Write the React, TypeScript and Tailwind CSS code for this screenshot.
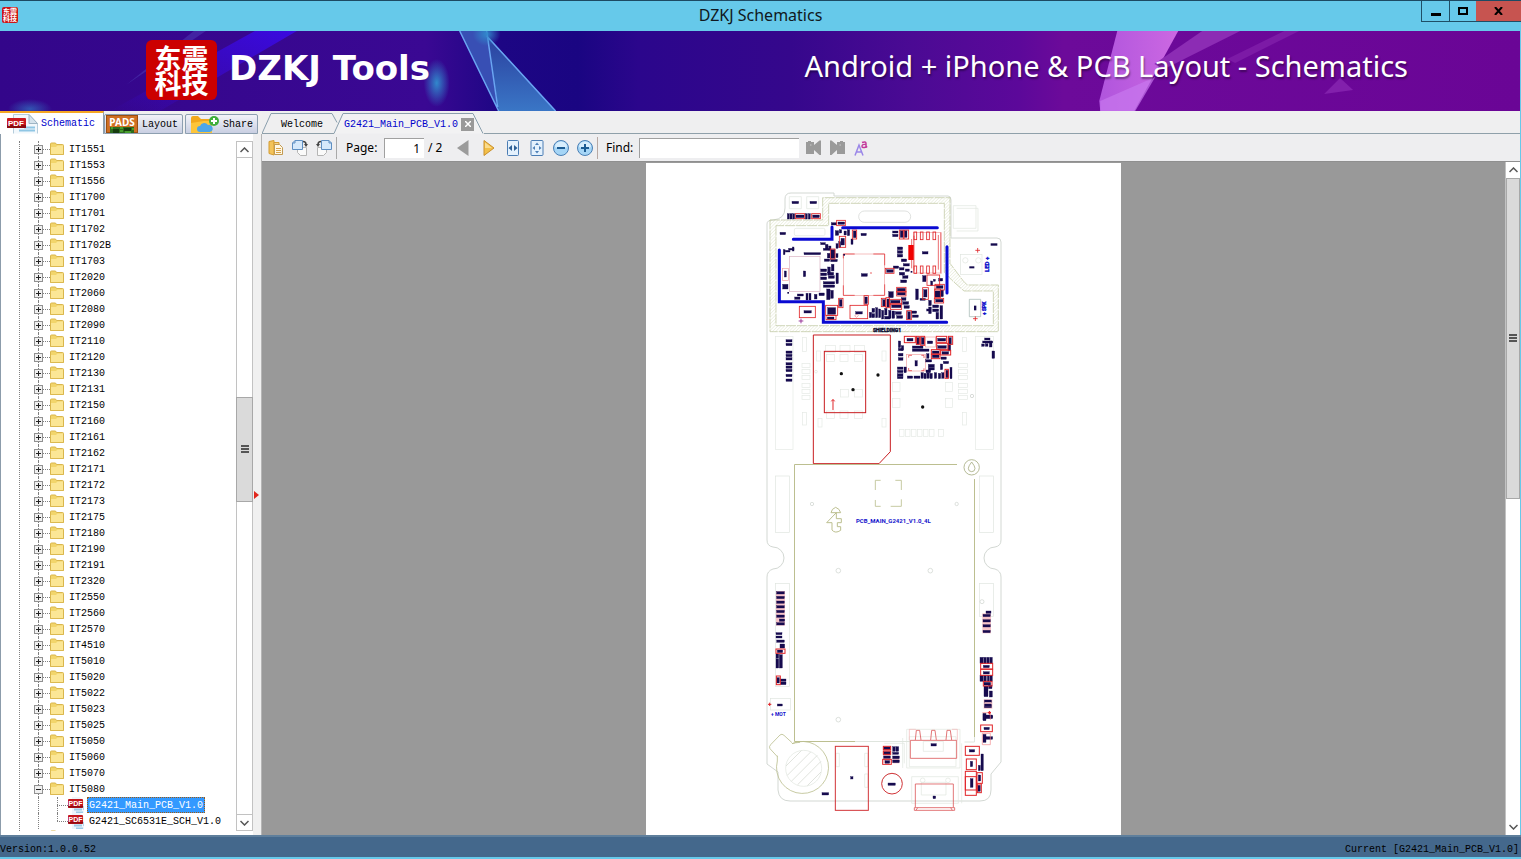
import { useState } from 'react'
import type { ReactNode } from 'react'

const FOLDERS = [
  'IT1551', 'IT1553', 'IT1556', 'IT1700', 'IT1701', 'IT1702', 'IT1702B', 'IT1703', 'IT2020', 'IT2060',
  'IT2080', 'IT2090', 'IT2110', 'IT2120', 'IT2130', 'IT2131', 'IT2150', 'IT2160', 'IT2161', 'IT2162',
  'IT2171', 'IT2172', 'IT2173', 'IT2175', 'IT2180', 'IT2190', 'IT2191', 'IT2320', 'IT2550', 'IT2560',
  'IT2570', 'IT4510', 'IT5010', 'IT5020', 'IT5022', 'IT5023', 'IT5025', 'IT5050', 'IT5060', 'IT5070',
  'IT5080',
]
const OPEN_FOLDER = 'IT5080'
const FILES = ['G2421_Main_PCB_V1.0', 'G2421_SC6531E_SCH_V1.0']

/* ---------- icons ---------- */

function FolderIcon() {
  return (
    <svg width="15" height="14" viewBox="0 0 15 14" className="shrink-0">
      <path d="M.5 12.500V2q0-1 1-1h4l1 1.500h6q1 0 1 1v9z" fill="#f2d56b" stroke="#d9b64c" />
      <path d="M1 5h5l1.500-1.500H13V12H1z" fill="#fbe695" />
      <path d="M.5 12.500h13" stroke="#dcb950" />
    </svg>
  )
}

function PdfIcon({ className = '' }: { className?: string }) {
  return (
    <svg width="16" height="16" viewBox="0 0 16 16" className={`shrink-0 ${className}`}>
      <path d="M4 0h8l4 4v12H4z" fill="#eef5fb" />
      <path d="M6 12.500h8M8 15.500h7" stroke="#9ccbe6" strokeWidth="2" />
      <path d="M15.500 9v4" stroke="#b7d4e8" />
      <rect x="0" y="2" width="15" height="9" rx="1" fill="#c4161c" />
      <path d="M0 9h15v1.500H0z" fill="#8f0a10" />
      <text x="7.500" y="9" textAnchor="middle" fontSize="7" fontWeight="700" fill="#fff" fontFamily="Liberation Sans, sans-serif">PDF</text>
    </svg>
  )
}

function PdfTabIcon() {
  return (
    <svg width="32" height="20" viewBox="0 0 32 20" className="shrink-0">
      <path d="M6.500 19.500V.500H22l8.500 9v10" fill="#f2f8fc" stroke="#b6cddc" />
      <path d="M22 .500l8.500 9H22z" fill="#d5e3ec" stroke="#9fb6c5" />
      <path d="M12 16.500h16M17 13.500h11" stroke="#8fc6e4" strokeWidth="2" />
      <rect x="0" y="4" width="19" height="10" rx="1" fill="#c9171e" />
      <path d="M0 11h19v3H0z" fill="#8c0b10" />
      <text x="9" y="12" textAnchor="middle" fontSize="8" fontWeight="700" fill="#fff" fontFamily="Liberation Sans, sans-serif">PDF</text>
    </svg>
  )
}

function PadsIcon() {
  return (
    <svg width="32" height="18" viewBox="0 0 32 18" className="shrink-0">
      <rect x=".5" y=".5" width="31" height="17" fill="#cf6f22" stroke="#9b4e10" />
      <text x="16" y="11" textAnchor="middle" fontSize="10" fontWeight="700" fill="#fff" fontFamily="Noto Sans, sans-serif">PADS</text>
      <path d="M4 12h24v6H4z" fill="#2c6a1c" />
      <path d="M7 14h6v4H7zM18 13h7v3h-7z" fill="#173c0f" />
      <path d="M5 13h2M14 13h3M26 14h2M14 16h3M19 17h6" stroke="#63d13a" />
    </svg>
  )
}

function ShareIcon() {
  return (
    <svg width="32" height="18" viewBox="0 0 32 18" className="shrink-0">
      <path d="M4 3q0-2 2-2h5l3 3h9q2 0 2 2v12H4z" fill="#f2a81d" />
      <path d="M4 8l13-2h8v12H4z" fill="#fdc53a" />
      <path d="M13 17a3 3 0 010-6 4.500 4.500 0 018-1 3.500 3.500 0 012 7z" fill="#4ea6e8" />
      <circle cx="27" cy="6" r="5" fill="#3fae3a" />
      <path d="M27 3v6M24 6h6" stroke="#fff" strokeWidth="2" />
    </svg>
  )
}

function CopyIcon() {
  return (
    <svg width="16" height="16" viewBox="0 0 16 16">
      <path d="M1 1.500l5-1V15l-5-1.500z" fill="#f3c35a" stroke="#d49c33" />
      <path d="M6 2.500h5v2H6z" fill="#f7d488" stroke="#d49c33" />
      <path d="M6.500 4.500h5l3 3v7h-8z" fill="#fff8e6" stroke="#c29a52" />
      <path d="M8 8.500h5M8 10.500h5M8 12.500h5" stroke="#d8a44a" />
    </svg>
  )
}

function RotateIcon({ flip = false }: { flip?: boolean }) {
  return (
    <svg width="16" height="16" viewBox="0 0 16 16" className={flip ? '-scale-x-100' : ''}>
      <path d="M5.500 7.500h9v8h-6l-3-3z" fill="#fafafa" stroke="#b5b5b5" />
      <path d="M3 .500h7.500v9H.500V3z" fill="#d6e9fb" stroke="#5f8fc2" />
      <path d="M3 .500V3H.500" fill="none" stroke="#5f8fc2" />
      <path d="M11 1.500c2 0 3 1 3 3" fill="none" stroke="#444" strokeWidth="1.500" />
      <path d="M12 4h4l-2 3z" fill="#444" />
    </svg>
  )
}

function TriangleIcon({ dir }: { dir: 'left' | 'right' }) {
  return dir === 'left' ? (
    <svg width="12" height="16" viewBox="0 0 12 16">
      <path d="M11.500 0v16L0 8z" fill="#9b9b9b" />
    </svg>
  ) : (
    <svg width="12" height="16" viewBox="0 0 12 16">
      <path d="M1 .500v15L11 8z" fill="#f2bf49" stroke="#c98f2c" />
      <path d="M2 2.500v5.500h7z" fill="#fbdc8d" />
    </svg>
  )
}

function FitWidthIcon() {
  return (
    <svg width="12" height="16" viewBox="0 0 12 16">
      <rect x=".5" y=".5" width="11" height="15" rx="1" fill="#e4f1fd" stroke="#4b7db4" />
      <path d="M5 5v6L1.500 8zM7 5v6l3.500-3z" fill="#2e6096" />
    </svg>
  )
}

function FitPageIcon() {
  return (
    <svg width="14" height="16" viewBox="0 0 14 16">
      <rect x="1" y=".5" width="12" height="15" rx="1" fill="#e4f1fd" stroke="#4b7db4" />
      <path d="M7 2.500L9 5H5zM7 13.500L9 11H5zM2.500 8L5 6v4zM11.500 8L9 6v4z" fill="#4d7fb5" />
    </svg>
  )
}

function ZoomIcon({ plus = false }: { plus?: boolean }) {
  return (
    <svg width="16" height="16" viewBox="0 0 16 16">
      <circle cx="8" cy="8" r="7.500" fill="#a5d5f6" stroke="#4a7fb5" />
      <path d="M2 7a6 5.500 0 0112 0q-6 3-12 0z" fill="#d8eefd" />
      <path d={plus ? 'M4 8h8M8 4v8' : 'M4 8h8'} stroke="#1c5c93" strokeWidth="2" />
    </svg>
  )
}

function FindIcon({ flip = false }: { flip?: boolean }) {
  return (
    <svg width="15" height="15" viewBox="0 0 15 15" className={flip ? '-scale-x-100' : ''}>
      <path d="M0 2h2V1h3v1h3v3l5.500-4.500H15V15h-1.500L8 10v4H0z" fill="#9a9a9a" />
      <path d="M4 5h1.500" stroke="#c9c9c9" />
    </svg>
  )
}

function MatchCaseIcon() {
  return (
    <svg width="14" height="16" viewBox="0 0 14 16">
      <path d="M1 15.500L5 5l4 10.500M2.500 12h5.500" fill="none" stroke="#9a86e8" strokeWidth="1.500" />
      <path d="M8 2.500q4-1.500 4 1V7q-4 1.500-4-.800T12 4.500M12 6l1 1.500" fill="none" stroke="#c43a9c" strokeWidth="1.500" />
    </svg>
  )
}

function Chevron({ up = false }: { up?: boolean }) {
  return (
    <svg width="9" height="6" viewBox="0 0 9 6" className={up ? '' : '-scale-y-100'}>
      <path d="M.5 5l4-4 4 4" fill="none" stroke="#555" strokeWidth="1.500" />
    </svg>
  )
}

/* ---------- board drawing ---------- */

// "x y w h" quadruples separated by commas
const parseRects = (list: string) => list.split(',').map((r) => r.trim().split(' ').map(Number))

function Boxes({ list, fill = 'none', stroke = 'none', sw = 2 }: { list: string; fill?: string; stroke?: string; sw?: number }) {
  return (
    <g fill={fill} stroke={stroke} strokeWidth={sw}>
      {parseRects(list).map(([x, y, w, h], i) => (
        <rect key={i} x={x} y={y} width={w} height={h} />
      ))}
    </g>
  )
}

const CHIP = '#160b4e'
const RED = '#e02428'
const PINK = '#f0a0a0'
const PALE = '#dfe5de'
const OLIVE = '#bcbf90'

const TOP_CHIPS = `96 49 20 7,150 49 20 7,82 86 6 16,90 86 6 16,98 86 6 16,108 90 24 8,136 86 6 16,145 86 6 16,158 90 20 8,
60 142 17 7,214 113 16 7,234 111 20 7,226 137 10 14,238 134 7 10,252 138 7 12,262 134 7 18,243 160 10 20,273 162 6 16,280 138 8 20,
303 145 16 7,398 138 16 6,398 148 16 7,421 137 8 20,433 137 8 20,412 186 16 8,412 197 16 8,412 208 16 8,424 222 16 8,487 200 17 7,
70 194 5 15,76 196 14 5,86 190 16 5,97 186 5 12,132 203 50 6,182 173 14 6,196 178 8 14,190 190 22 6,206 183 7 12,228 176 6 14,236 170 6 18,
202 205 8 14,213 194 12 26,228 206 6 12,193 222 16 7,212 223 20 7,130 258 7 17,73 258 6 18,68 298 16 14,
182 252 18 8,182 264 18 8,182 276 18 8,203 262 18 8,205 272 18 8,190 290 34 7,190 300 34 7,203 246 8 18,214 238 8 20,228 264 7 32,200 312 10 32,212 316 8 24,
104 336 16 7,112 327 18 6,138 325 6 20,147 325 6 20,163 328 8 14,177 324 16 8,132 377 22 7,203 368 24 20,202 396 20 7,238 344 8 20,
304 266 18 8,380 254 20 8,400 243 16 7,430 236 18 7,418 248 14 7,418 262 16 8,436 252 12 7,428 272 16 8,422 285 18 8,
314 336 8 20,287 380 20 7,386 320 14 18,412 310 24 8,412 322 24 8,368 344 8 20,381 342 7 24,392 346 28 8,395 360 28 8,
336 370 8 12,336 386 8 12,347 368 6 30,356 372 6 26,365 376 6 26,374 370 7 20,374 394 16 8,386 376 7 24,396 378 8 22,406 380 18 8,410 392 18 8,328 382 7 16,
428 350 18 8,432 362 16 8,443 380 8 22,424 338 14 8,457 390 18 7,454 378 16 7,467 312 8 32,491 314 10 22,480 340 16 6,
520 283 6 6,512 288 6 14,488 272 10 18,529 302 20 8,525 318 16 18,527 343 22 8,536 280 12 8,542 315 8 20,
506 346 8 16,506 366 8 20,518 360 18 8,518 372 18 8,528 382 8 20,540 362 8 40,500 372 12 6`

const TOP_RED = `230 106 26 16,106 86 28 15,155 86 26 15,238 154 19 33,277 135 13 27,418 135 12 27,432 135 14 27,211 192 14 30,376 250 26 15,
118 364 48 34,197 361 36 30,198 391 30 13,236 340 13 28,270 361 53 40,312 332 13 26,364 340 13 25,378 338 10 30,388 343 36 15,391 355 34 18,
410 307 28 14,410 319 28 14,440 377 14 27,501 270 38 31,488 308 17 35,525 298 28 17,524 312 17 26,523 340 28 14,
462 141 8 23,481 141 8 23,500 141 8 23,519 141 8 23,462 243 8 22,481 243 8 22,500 243 8 22,519 243 8 22`

const MID_CHIPS = `78 44 18 7,78 55 18 7,78 78 18 7,78 88 18 7,78 98 18 7,78 113 18 7,78 123 18 7,78 133 18 7,78 148 18 7,78 162 18 7,
674 39 16 6,668 48 30 6,665 57 8 7,676 56 8 8,688 48 8 18,696 78 8 22,415 48 7 20,415 70 14 7,415 85 14 8,415 98 14 8,424 62 7 14,
412 126 17 7,412 136 17 7,412 146 17 7,412 154 17 7,432 126 7 17,441 40 18 8,470 38 8 20,484 38 8 20,502 48 16 8,533 40 24 8,533 62 26 8,566 38 8 20,564 58 8 20,
457 63 32 7,457 72 50 7,517 78 20 8,517 90 20 8,500 86 7 14,497 104 18 7,546 80 20 8,543 96 16 7,465 107 7 16,505 118 18 8,505 127 18 8,541 117 7 17,550 109 16 7,
498 135 14 8,442 153 16 7,462 153 18 7,483 143 7 17,492 145 7 16,501 143 7 17,510 145 7 16,523 143 7 17,535 145 7 16,545 143 7 17,558 136 8 22,570 127 6 34`

const MID_RED = `433 34 33 19,469 34 9 24,482 34 12 27,529 34 31 18,530 55 34 18,565 34 13 24,514 74 26 13,514 88 26 13,542 76 30 14,555 133 10 27`

const PALE_MID = `46 35 53 339,647 35 53 339,127 38 12 42,607 38 12 42,127 262 12 38,607 262 12 38,170 78 12 30,366 78 12 30,174 280 12 26,366 280 12 26,
196 62 30 20,240 62 30 20,284 62 30 20,200 88 24 22,240 88 24 22,284 88 24 22,242 194 24 22,284 194 24 22,200 258 24 22,240 258 24 22,284 258 24 22,
398 172 22 27,398 220 22 27,556 172 22 27,556 220 22 27,418 313 14 22,436 313 14 22,454 313 14 22,472 313 14 22,490 313 14 22,508 313 14 22,536 313 14 22,
126 116 24 12,126 134 24 12,126 152 24 12,126 176 24 12,126 194 24 12,126 212 24 12,596 116 26 12,596 134 26 12,596 152 26 12,596 176 26 12,596 194 26 12,596 212 26 12`

const SIDE_CHIPS = `50 35 23 7,50 49 23 7,50 63 23 7,50 77 23 7,50 91 23 7,50 105 23 7,58 117 16 7,50 128 23 7,
48 158 18 6,48 168 18 6,50 180 23 7,60 192 14 12,52 210 16 8,48 222 8 12,48 236 8 28,58 224 9 40,50 293 8 16,60 297 18 7,62 306 16 8,52 372 15 6,
678 93 15 7,669 103 22 7,669 119 22 7,669 134 22 7,669 151 22 7,660 232 9 18,671 232 8 18,681 232 7 18,690 232 7 18,670 256 18 7,670 275 18 7,
660 286 10 18,672 286 7 18,682 286 6 18,690 286 7 18,672 307 20 8,672 318 12 32,686 316 10 10,688 333 9 18,673 361 22 8,673 375 22 8,
669 402 8 18,678 405 20 8`

const SIDE_RED = `48 207 27 13,49 288 12 26,662 250 36 17,662 268 36 18,670 304 26 14`

const LOW_CHIPS = `186 278 20 7,272 230 7 7,384 249 22 7,513 131 16 7,519 288 8 8,371 141 20 8,371 155 20 8,371 168 20 7,375 182 14 8,
398 140 8 14,408 140 8 14,398 157 18 6,398 168 20 8,398 180 20 8,669 40 9 22,678 48 20 8,672 82 16 7,669 103 9 24,678 110 20 8,
628 149 16 7,631 184 7 16,663 162 7 50,655 196 6 16,631 236 8 26,655 225 7 18,653 256 8 18,674 0 20 6,674 12 20 8`

const LOW_RED = `370 139 22 10,370 153 22 10,368 178 26 15,616 139 42 27,619 177 30 32,651 218 16 32,652 252 12 26,616 214 33 72,616 230 33 40,662 75 35 20`

function BoardDrawing() {
  return (
    <svg width="475" height="671" viewBox="646 163 475 671" className="block" role="img" aria-label="G2421_Main_PCB_V1.0">
      <defs>
        <pattern id="hatch" width="7" height="7" patternUnits="userSpaceOnUse" patternTransform="rotate(45)">
          <path d="M0 0v7" stroke="#d3d9b8" strokeWidth="2" />
        </pattern>
      </defs>

      {/* board outline */}
      <path
        d="M767 540V224q0-4 6-4 12-1 12-12v-9q0-6 6-6h43v3h114q3 0 3 4v38h46q4 0 4 4V540q0 6-6 7a11 11 0 000 22q6 2 6 8V762l-10 12v16q0 11-11 11H790q-11 0-12-11V772l-11-8V577q0-6 6-8a11 11 0 000-22q-6-1-6-7z"
        fill="none" stroke="#d3d8d3" strokeWidth="1"
      />

      {/* RF and baseband section */}
      <g transform="translate(760 185) scale(.33333)">
        <path
          fillRule="evenodd" fill="url(#hatch)" stroke="#b9c199" strokeWidth="2" strokeDasharray="30 3"
          d="M30 105H188V38H570V235L610 288L622 300H715V440H30zM48 122V422H700V318H612L575 285L553 262V55H206V122z"
        />
        <g fill="none" stroke={PALE} strokeWidth="2">
          <rect x="296" y="78" width="156" height="34" rx="17" stroke="#cfd2cf" />
          <rect x="103" y="130" width="92" height="22" rx="5" />
          <path d="M580 62h68v68h-68zM590 70h64v68h-64M88 35h36v36H88zM140 35h36v36h-36z" />
          <rect x="602" y="208" width="64" height="60" />
          <circle cx="616" cy="226" r="8" /><circle cx="655" cy="226" r="8" />
          <path d="M628 343h34v52h-34z" stroke="#9bb1aa" />
        </g>
        <Boxes list="88 214 92 106" stroke="#d9aebf" />
        <Boxes list="250 207 124 124" stroke={PINK} />
        <path d="M250 220v-13h34M340 207h34v34M374 298v33h-34M284 331h-34v-30" fill="none" stroke={RED} strokeWidth="2" />
        <Boxes list="460 142 82 122,68 250 18 36" stroke={PINK} />
        <path d="M455 162v88M462 152v104M543 142v124M535 150v104" stroke={RED} strokeWidth="2" />
        <Boxes list="445 180 16 45" fill="#f00000" />
        <Boxes list={TOP_CHIPS} fill={CHIP} stroke={CHIP} sw={1} />
        <Boxes list={TOP_RED} stroke={RED} sw={2.500} />
        <path d="M248 128H532M216 126V163H100M58 195V350H190V412H560M561 185V324" fill="none" stroke="#0a0ad2" strokeWidth="9" strokeLinecap="round" />
        <path d="M646 196h14M653 189v14M639 401h14M646 394v14" stroke={RED} strokeWidth="2.500" />
        <path d="M116 408h14M123 401v14" stroke="#8a1c8a" strokeWidth="2.500" />
        <path d="M284 393l6-6 5 5-5 5z" fill="none" stroke={RED} />
        <Boxes list="628 244 15 6,642 362 7 14,692 175 20 7,82 321 5 5,250 207 5 5,452 258 5 5" fill={CHIP} />
        <circle cx="333" cy="264" r="2" fill={RED} />
      </g>

      {/* SIM and PA section */}
      <g transform="translate(760 325) scale(.33333)">
        <Boxes list={PALE_MID} stroke="#e4e9e4" sw={2} />
        <path d="M160 30H391V380L357 416H160z" fill="none" stroke="#c81c20" strokeWidth="3" />
        <Boxes list="193 79 124 184" stroke="#c81c20" sw={3} />
        <path d="M219 255v-30M214 229l5-6 5 6" stroke={RED} fill="none" strokeWidth="3" />
        <Boxes list="496 36 30 30,440 88 56 50" stroke={PINK} />
        <path d="M446 98v-7h10M484 91h8v8M492 130v7h-8M456 137h-10v-8" fill="none" stroke={RED} strokeWidth="2" />
        <Boxes list={MID_CHIPS} fill={CHIP} stroke={CHIP} sw={1} />
        <Boxes list={MID_RED} stroke={RED} sw={3} />
        <g fill="#111">
          <circle cx="244" cy="146" r="5" /><circle cx="354" cy="150" r="5" /><circle cx="279" cy="194" r="5" /><circle cx="488" cy="246" r="5" />
        </g>
        <circle cx="636" cy="213" r="5" fill="none" stroke="#c5cac5" strokeWidth="2" />
        <circle cx="168" cy="140" r="4" fill="none" stroke={PALE} strokeWidth="2" />
        <circle cx="635" cy="427" r="23" fill="none" stroke="#a7ad82" strokeWidth="2.500" />
        <path d="M635 411q-10 13-10 19a10 10 0 0020 0q0-6-10-19z" fill="none" stroke="#a7ad82" strokeWidth="2.500" />
      </g>

      {/* display area */}
      <path d="M794.500 464.500H957M794.500 464.500V741.500H855M974.500 479V737" fill="none" stroke={OLIVE} />
      <path d="M855 741.500H910M974.500 737v5h-10" fill="none" stroke={PALE} />
      <g transform="translate(760 470) scale(.33333)" fill="none" stroke={PALE} strokeWidth="2">
        <rect x="46" y="18" width="42" height="170" />
        <rect x="658" y="18" width="42" height="170" />
        <path d="M346 60V31h16M406 31h18v29M424 88v21h-32M362 109h-16V90" stroke={OLIVE} strokeWidth="2.500" />
        <path
          d="M213 128q2-12 14-16 12 4 15 16zM229 128l-29 30h16v22q10 12 26 1v-11h-10v-12h12v-12h-15z"
          stroke={OLIVE} strokeWidth="3"
        />
        <g stroke="#ccd2cc">
          <circle cx="156" cy="102" r="5" /><circle cx="590" cy="102" r="5" /><circle cx="235" cy="302" r="7" /><circle cx="511" cy="302" r="7" /><circle cx="235" cy="749" r="7" />
        </g>
      </g>

      {/* side connectors */}
      <g transform="translate(760 580) scale(.33333)">
        <Boxes list="46 10 42 310,658 10 42 100" stroke={PALE} />
        <circle cx="666" cy="65" r="6" fill="none" stroke="#ccd2cc" strokeWidth="2" />
        <Boxes list="48 33 27 104,667 100 26 60,671 358 26 28" fill="#f6c4c8" />
        <Boxes list="31 356 61 34" stroke={PALE} />
        <Boxes list={SIDE_CHIPS} fill={CHIP} stroke={CHIP} sw={1} />
        <Boxes list={SIDE_RED} stroke={RED} sw={3} />
        <path d="M24 373h10M29 368v10M683 398h10M688 393v10" stroke={RED} strokeWidth="3" />
      </g>

      {/* bottom section */}
      <g transform="translate(760 700) scale(.33333)">
        <g fill="none" stroke={OLIVE} strokeWidth="2.500">
          <path d="M52 170L30 146q-4-6 2-12l28-29q6-5 12 1l24 22" />
          <path d="M96 131a78 78 0 11-44 52v-16M96 131q8-3 24-4" />
        </g>
        <circle cx="131" cy="205" r="54" fill="none" stroke={PALE} strokeWidth="2" />
        <path d="M78 198l46-46M82 226l70-70M94 244l78-78M113 254l70-70M142 257l41-41" stroke="#d0d5cb" strokeWidth="2" />
        <g fill="none" stroke={PALE} strokeWidth="2">
          <path d="M440 88h160v116H440zM455 230h140v80H455zM373 130h60v60M484 285h74v-38h-74zM428 114v90M605 130v180M448 110h140v90H448zM490 124h60v30h-60zM228 160h10v40h-10zM314 160h10v40h-10zM314 222h10v40h-10z" />
          <path d="M366 250a30 30 0 0160 0" />
          <circle cx="488" cy="241" r="7" /><circle cx="564" cy="241" r="7" />
        </g>
        <Boxes list="226 139 99 192" stroke="#d23438" sw={3} />
        <circle cx="396" cy="251" r="31" fill="none" stroke="#d23438" strokeWidth="3" />
        <path
          d="M451 121h139v54H451zM466 120l3-29h10l4 29M512 120l3-29h10l4 29M558 120l3-29h10l4 29M466 322V252h114v70M463 331v-8h121v8zM468 331l5-8M577 331l-5-8"
          fill="none" stroke="#dc5b5e" strokeWidth="2.500"
        />
        <path d="M448 121V88h20M592 121V88h-16" fill="none" stroke="#f3b5b6" strokeWidth="2" />
        <Boxes list="370 139 22 50,398 168 20 22,673 0 22 20" fill="#f3c0c4" />
        <Boxes list={LOW_CHIPS} fill={CHIP} stroke={CHIP} sw={1} />
        <Boxes list={LOW_RED} stroke={RED} sw={3} />
        <path d="M667 38h24v22M667 100h24v34h-24z" fill="none" stroke="#f08a8c" strokeWidth="2" />
        <path d="M684 38h9M689 33v10" stroke={RED} strokeWidth="3" />
      </g>

      <g fontFamily="Roboto, Liberation Sans, sans-serif" fontWeight="700" fill="#1212cc" fontSize="6">
        <text x="856" y="523">PCB_MAIN_G2421_V1.0_4L</text>
        <text x="873" y="332" fill="#0b0b30" stroke="#0b0b30" strokeWidth=".4" fontSize="5">SHIELDING1</text>
        <text x="771" y="716" fontSize="5">+ MOT</text>
        <text transform="translate(989 272) rotate(-90)" stroke="#1212cc" strokeWidth=".4">LED +</text>
        <text transform="translate(986 315) rotate(-90)" stroke="#1212cc" strokeWidth=".4" fontSize="5">+ SPK</text>
      </g>
    </svg>
  )
}

/* ---------- window parts ---------- */

function TitleBar() {
  return (
    <header className="relative flex h-[31px] shrink-0 items-start justify-between border-t border-[#1d4a63] bg-[#66c9ea] font-['Noto_Sans','Open_Sans',sans-serif]">
      <div className="mt-1.5 ml-0.5 grid size-4 place-content-center rounded-xs bg-[#cc1417] text-center font-['Noto_Sans_CJK_SC',sans-serif] text-[7px] leading-[7px] font-bold text-white">
        <span>东震<br />科技</span>
      </div>
      <h1 className="absolute inset-x-0 top-0 text-center text-[16px] leading-[29px] text-[#101820]">DZKJ Schematics</h1>
      <div className="relative flex h-[21px] border-b border-l border-[#1f4e66] text-black">
        <button aria-label="Minimize" className="grid w-7 place-items-center border-r border-[#1f4e66]">
          <svg width="10" height="10"><path d="M0 7h10v3H0z" /></svg>
        </button>
        <button aria-label="Maximize" className="grid w-[26px] place-items-center">
          <svg width="10" height="8"><path d="M1 1h8v6H1z" fill="none" stroke="#000" strokeWidth="2" /></svg>
        </button>
        <button aria-label="Close" className="grid w-[45px] place-items-center bg-[#c75450]">
          <svg width="9" height="8"><path d="M1 0l7 8M8 0L1 8" stroke="#000" strokeWidth="2" /></svg>
        </button>
      </div>
    </header>
  )
}

function Banner() {
  return (
    <div className="relative flex h-20 shrink-0 items-center justify-between overflow-hidden border-r border-[#66c9ea] bg-[#33078a] pr-28 pb-0.5 pl-[146px] text-white">
      <svg className="absolute inset-0 h-full w-full" viewBox="0 0 1521 80" preserveAspectRatio="none" aria-hidden="true">
        <defs>
          <linearGradient id="bg" x1="0" x2="1">
            <stop offset="0" stopColor="#33068a" />
            <stop offset=".28" stopColor="#3a0893" />
            <stop offset=".33" stopColor="#1d0684" />
            <stop offset=".38" stopColor="#1a0582" />
            <stop offset=".42" stopColor="#2b068c" />
            <stop offset=".52" stopColor="#35078c" />
            <stop offset=".6" stopColor="#4b0a94" />
            <stop offset=".67" stopColor="#5c089a" />
            <stop offset=".7" stopColor="#6c0a9a" />
            <stop offset="1" stopColor="#6a0596" />
          </linearGradient>
          <linearGradient id="beam" x1="0" x2="0" y1="0" y2="1">
            <stop offset="0" stopColor="#2a3f9e" />
            <stop offset="1" stopColor="#3a76c6" />
          </linearGradient>
          <linearGradient id="pinkBeam" x1="0" x2="1">
            <stop offset="0" stopColor="#b055dd" />
            <stop offset="1" stopColor="#cc68e2" />
          </linearGradient>
          <linearGradient id="stripe" x1="1" y1="0" x2="0" y2="1">
            <stop offset="0" stopColor="#3a0ae0" />
            <stop offset="1" stopColor="#3a0ae0" stopOpacity="0" />
          </linearGradient>
          <radialGradient id="glow">
            <stop offset="0" stopColor="#3188cc" />
            <stop offset="1" stopColor="#3188cc" stopOpacity="0" />
          </radialGradient>
        </defs>
        <rect width="1521" height="80" fill="url(#bg)" />
        <path d="M255 0h42L160 80h-50z" fill="url(#stripe)" />
        <path d="M206 0l-80 54 68-54z" fill="#5a55c8" opacity=".35" />
        <path d="M460 0h27l11 78z" fill="#384fb4" />
        <path d="M487 4l69 76h-57z" fill="url(#beam)" />
        <path d="M460 0l39 80M487 0l11 76M487 5l69 75" stroke="#6aa5f2" strokeWidth="1.500" fill="none" />
        <ellipse cx="437" cy="52" rx="13" ry="24" fill="url(#glow)" />
        <ellipse cx="487" cy="3" rx="14" ry="12" fill="url(#glow)" />
        <ellipse cx="30" cy="78" rx="22" ry="10" fill="url(#glow)" opacity=".6" />
        <path d="M1118 0h61l-44 80h-34l-1-10z" fill="url(#pinkBeam)" />
        <path d="M1101 70l55-24-20 34h-35z" fill="#c878ee" opacity=".7" />
        <path d="M1203 0h38l-76 38-10-5z" fill="#8c2cb4" />
        <path d="M1285 0h15l-64 32-8-4z" fill="#7c1aa6" />
        <path d="M1341 47l13 12-29 4z" fill="#8220ac" />
      </svg>
      <div className="relative flex items-center">
        <div className="grid h-[60px] w-[71px] place-content-center rounded-md bg-[#cc0000] text-center font-['Noto_Sans_CJK_SC',sans-serif] text-[27px] leading-[25px] font-bold">
          <span>东震<br />科技</span>
        </div>
        <span className="ml-3 pb-1 font-['DejaVu_Sans',sans-serif] text-[34px] leading-none font-bold">DZKJ Tools</span>
      </div>
      <p className="relative mb-2 font-['Noto_Sans','Open_Sans',sans-serif] text-[29px] whitespace-nowrap text-shadow-[1px_2px_2px_#0006]">
        Android + iPhone &amp; PCB Layout - Schematics
      </p>
    </div>
  )
}

function SideTab({ label, icon, active, onClick }: { label: string; icon: ReactNode; active: boolean; onClick: () => void }) {
  return (
    <button
      role="tab"
      aria-selected={active}
      onClick={onClick}
      className={
        active
          ? 'flex h-[23px] items-end gap-0.5 border-t-2 border-r border-[#f5a623] border-r-[#8fa0ae] bg-white pr-2 pl-[7px] text-[#0000cc]'
          : 'mr-0.5 flex h-5 items-end gap-1 rounded-t-xs border border-[#8d9fb0] bg-linear-to-b from-[#f2f3f8] to-[#c9cfe2] px-px pr-1 text-black'
      }
    >
      {icon}
      <span className="self-center">{label}</span>
    </button>
  )
}

function TreeRow({ name, open = false }: { name: string; open?: boolean }) {
  return (
    <li className="relative flex h-4 items-center pl-[34px]">
      <span className="absolute inset-y-0 left-[38px] border-l border-dotted border-[#808080]" />
      <button aria-label={open ? 'Collapse' : 'Expand'} className="relative grid size-[9px] place-items-center border border-[#919191] bg-[#f0f0f0]">
        <svg width="5" height="5"><path d={open ? 'M0 2.500h5' : 'M0 2.500h5M2.500 0v5'} stroke="#222" /></svg>
      </button>
      <span className="w-[7px] border-t border-dotted border-[#808080]" />
      <FolderIcon />
      <span className="ml-1">{name}</span>
    </li>
  )
}

function FileRow({ name, selected, last, onSelect }: { name: string; selected: boolean; last: boolean; onSelect: () => void }) {
  return (
    <li className="relative flex h-4 items-center pl-[57px]">
      <span className="absolute inset-y-0 left-[38px] border-l border-dotted border-[#808080]" />
      <span className={`absolute top-0 left-[57px] border-l border-dotted border-[#808080] ${last ? 'h-2' : 'h-4'}`} />
      <span className="w-[11px] border-t border-dotted border-[#808080]" />
      <PdfIcon />
      <button
        onClick={onSelect}
        className={`ml-[3px] h-4 border px-px leading-4 ${selected ? 'border-dotted border-[#a05a10] bg-[#3399ff] text-white' : 'border-transparent'}`}
      >
        {name}
      </button>
    </li>
  )
}

function Grip() {
  return (
    <span className="flex flex-col gap-px">
      <i className="h-0.5 w-2 bg-[#555]" />
      <i className="h-0.5 w-2 bg-[#555]" />
      <i className="h-0.5 w-2 bg-[#555]" />
    </span>
  )
}

function Sidebar() {
  const [tab, setTab] = useState('Schematic')
  const [selected, setSelected] = useState(FILES[0])

  return (
    <aside className="flex w-[262px] shrink-0 flex-col border-l border-[#8c9cab] bg-[#f0f0f0]">
      <div role="tablist" className="-ml-px flex h-[23px] shrink-0 items-end">
        <SideTab label="Schematic" icon={<PdfTabIcon />} active={tab === 'Schematic'} onClick={() => setTab('Schematic')} />
        <SideTab label="Layout" icon={<PadsIcon />} active={tab === 'Layout'} onClick={() => setTab('Layout')} />
        <SideTab label="Share" icon={<ShareIcon />} active={tab === 'Share'} onClick={() => setTab('Share')} />
      </div>
      <div className="flex min-h-0 flex-1">
        <div className="flex min-w-0 flex-1 bg-white pt-[7px] pb-1">
          <ul className="relative -ml-px min-w-0 flex-1 overflow-hidden">
            <span className="absolute inset-y-0 left-[19px] border-l border-dotted border-[#808080]" />
            {FOLDERS.map((name) => (
              <TreeRow key={name} name={name} open={name === OPEN_FOLDER} />
            ))}
            {FILES.map((name, i) => (
              <FileRow key={name} name={name} selected={name === selected} last={i === FILES.length - 1} onSelect={() => setSelected(name)} />
            ))}
            <li className="flex h-4 items-center pl-[50px]">
              <FolderIcon />
            </li>
          </ul>
          <div className="flex w-[17px] shrink-0 flex-col border border-[#c2c2c2]">
            <button aria-label="Scroll tree up" className="grid h-4 shrink-0 place-items-center border-b border-[#c2c2c2]"><Chevron up /></button>
            <div className="grow-[239]" />
            <div className="-mx-px grid h-[105px] place-items-center border border-[#a8a8a8] bg-[#dadada]"><Grip /></div>
            <div className="grow-[313]" />
            <button aria-label="Scroll tree down" className="grid h-4 shrink-0 place-items-center border-t border-[#c2c2c2]"><Chevron /></button>
          </div>
        </div>
        <div className="flex w-[9px] items-center border-r border-[#b5b5b5]">
          <svg width="5" height="8" className="ml-px mt-5"><path d="M0 0l5 4-5 4z" fill="#e0261c" /></svg>
        </div>
      </div>
    </aside>
  )
}

function DocTabs() {
  return (
    <div role="tablist" className="relative flex h-[23px] shrink-0 items-end">
      <svg width="224" height="21" className="absolute bottom-0 left-0" fill="none" stroke="#8a9fad">
        <path d="M0 20.500L9 .500H70l5 9" fill="none" />
        <path d="M72 20.500L81 .500H211l10 20" fill="#f2f2f3" />
      </svg>
      <span className="w-[222px] shrink-0" />
      <span className="flex-1 border-b border-[#8fa0aa]" />
      <span className="absolute bottom-0 left-0 w-[72px] border-b border-[#8fa0aa]" />
      <div className="absolute inset-0 flex h-[23px] items-center pt-[3px]">
        <button role="tab" aria-selected="false" className="ml-[19px]">Welcome</button>
        <button role="tab" aria-selected="true" className="ml-[21px] text-[#0000cc]">G2421_Main_PCB_V1.0</button>
        <button aria-label="Close tab" className="ml-[3px] grid size-[13px] place-items-center bg-[#999]">
          <svg width="6" height="6"><path d="M0 0l6 6M6 0L0 6" stroke="#fff" strokeWidth="1.500" /></svg>
        </button>
      </div>
    </div>
  )
}

function ToolButton({ label, children }: { label: string; children: ReactNode }) {
  return (
    <button aria-label={label} title={label} className="grid h-6 w-6 shrink-0 place-items-center">
      {children}
    </button>
  )
}

function Toolbar() {
  const [page, setPage] = useState('1')
  const [find, setFind] = useState('')

  return (
    <div className="flex h-[27px] shrink-0 items-center bg-[#eeeef0] pl-0.5 font-['Noto_Sans','Open_Sans',sans-serif] text-[12px] text-black">
      <ToolButton label="Copy"><CopyIcon /></ToolButton>
      <ToolButton label="Rotate right"><RotateIcon /></ToolButton>
      <ToolButton label="Rotate left"><RotateIcon flip /></ToolButton>
      <span className="h-[22px] w-px bg-[#a9a9a9]" />
      <label htmlFor="page" className="ml-[9px] w-[38px]">Page:</label>
      <input
        id="page"
        value={page}
        onChange={(e) => setPage(e.target.value)}
        className="h-5 w-10 border-t border-l border-[#a0a0a0] bg-white pr-1 text-right"
      />
      <span className="ml-1 w-[23px]">/ 2</span>
      <ToolButton label="Previous page"><TriangleIcon dir="left" /></ToolButton>
      <span className="w-0.5" />
      <ToolButton label="Next page"><TriangleIcon dir="right" /></ToolButton>
      <ToolButton label="Fit width"><FitWidthIcon /></ToolButton>
      <ToolButton label="Fit page"><FitPageIcon /></ToolButton>
      <ToolButton label="Zoom out"><ZoomIcon /></ToolButton>
      <ToolButton label="Zoom in"><ZoomIcon plus /></ToolButton>
      <span className="h-[22px] w-px bg-[#b8a9a4]" />
      <label htmlFor="find" className="ml-2 w-[33px]">Find:</label>
      <input
        id="find"
        value={find}
        onChange={(e) => setFind(e.target.value)}
        className="mr-0.5 h-5 w-40 border-t border-l border-[#a0a0a0] bg-white px-1"
      />
      <ToolButton label="Find previous"><FindIcon /></ToolButton>
      <ToolButton label="Find next"><FindIcon flip /></ToolButton>
      <ToolButton label="Match case"><MatchCaseIcon /></ToolButton>
    </div>
  )
}

function Viewer() {
  return (
    <div className="flex min-h-0 flex-1 border-t border-[#8f8f8f] bg-[#999999]">
      <div className="flex min-w-0 flex-1 justify-center overflow-hidden pt-px">
        <div className="min-h-full bg-white">
          <BoardDrawing />
        </div>
      </div>
      <div className="flex w-[15px] shrink-0 flex-col border-l border-[#c2c2c2] bg-white">
        <button aria-label="Scroll page up" className="grid h-4 shrink-0 place-items-center"><Chevron up /></button>
        <div className="grid grow-[311] place-items-center border border-[#a8a8a8] bg-[#dadada]"><Grip /></div>
        <div className="grow-[321]" />
        <button aria-label="Scroll page down" className="grid h-4 shrink-0 place-items-center"><Chevron /></button>
      </div>
    </div>
  )
}

export default function App() {
  return (
    <div className="flex h-screen flex-col overflow-hidden bg-[#efeff0] font-['Liberation_Mono','Noto_Sans_CJK_SC',monospace] text-[10px] text-black">
      <TitleBar />
      <Banner />
      <main className="flex min-h-0 flex-1 border-r border-[#66c9ea]">
        <Sidebar />
        <section className="flex min-w-0 flex-1 flex-col">
          <DocTabs />
          <Toolbar />
          <Viewer />
        </section>
      </main>
      <footer className="flex h-6 shrink-0 items-end justify-between border-t-2 border-b-2 border-t-[#5f7f9c] border-b-[#66c9ea] bg-[#44688c] pr-0.5 leading-[14px]">
        <span>Version:1.0.0.52</span>
        <span>Current [G2421_Main_PCB_V1.0]</span>
      </footer>
    </div>
  )
}
